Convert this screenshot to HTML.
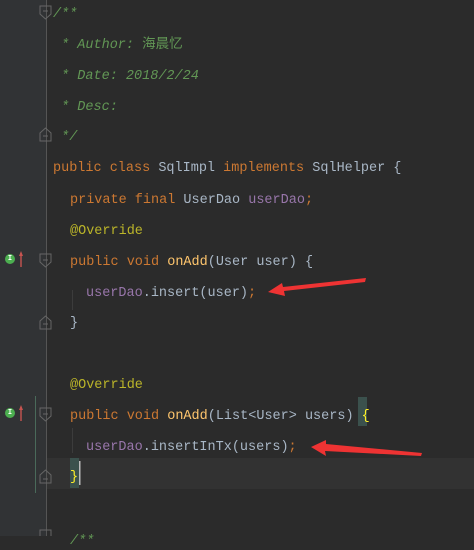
<!DOCTYPE html>
<html><head><meta charset="utf-8"><style>
body{margin:0;width:474px;height:536px;background:#2b2b2b;overflow:hidden;position:relative;font-family:"Liberation Mono","Noto Sans CJK SC",monospace;font-size:13.5px}
.g{position:absolute;left:0;top:0;width:46px;height:536px;background:#313335}
.gl{position:absolute;left:46px;top:0;width:1px;height:536px;background:#555}
.l{position:absolute;white-space:pre;color:#a9b7c6;line-height:16px;margin-top:2px}
.k{color:#cc7832}.c{color:#629755;font-style:italic}.f{color:#ffc66d}.p{color:#9876aa}.a{color:#bbb529}
.ic{position:absolute;left:5px;width:10px;height:10px;border-radius:50%;background:#4caf50;color:#fff;font-size:7px;line-height:10px;text-align:center;font-weight:bold}
</style></head><body>
<div class="g"></div><div class="gl"></div>
<div style="position:absolute;left:47px;top:458px;width:427px;height:31px;background:#323232"></div>
<div style="position:absolute;left:35px;top:396px;width:1px;height:97px;background:#4a6a5a"></div>
<div style="position:absolute;left:72px;top:290px;width:1px;height:20px;background:#3c3c3c"></div>
<div style="position:absolute;left:72px;top:428px;width:1px;height:25px;background:#3c3c3c"></div>
<svg style="position:absolute;left:0;top:0" width="474" height="536">
<g fill="none" stroke="#666">
<path d="M40 6h11v8l-5.5 5-5.5-5z"/><path d="M43 11h5"/>
<path d="M40 141h11v-8l-5.5-5-5.5 5z"/><path d="M43 136h5"/>
<path d="M40 254h11v8l-5.5 5-5.5-5z"/><path d="M43 260h5"/>
<path d="M40 329h11v-8l-5.5-5-5.5 5z"/><path d="M43 324h5"/>
<path d="M40 408h11v8l-5.5 5-5.5-5z"/><path d="M43 414h5"/>
<path d="M40 483h11v-8l-5.5-5-5.5 5z"/><path d="M43 479h5"/>
<path d="M40 536v-6h11v6"/>
</g>
<g fill="#c75450"><path d="M19 256l2-5 2 5h-1.3v11h-1.4v-11z"/><path d="M19 410l2-5 2 5h-1.3v11h-1.4v-11z"/></g>
<g fill="#ee3333">
<path d="M268 292l14-9 1 4 83-9-1 4-81 9 1 5z"/>
<path d="M311 447l15-7 0 4 96 9-1 3-96-5 1 5z"/>
</g>
<rect x="358" y="397" width="9" height="29" fill="#3b514d"/>
<rect x="70" y="458" width="9" height="30" fill="#3b514d"/>
<rect x="79" y="461" width="1.5" height="24" fill="#bbb"/>
</svg>
<div class="ic" style="top:254px">I</div><div class="ic" style="top:408px">I</div>
<div class="l c" style="left:53px;top:5px">/**</div>
<div class="l c" style="left:53px;top:36px"> * Author: <span style="font-style:normal">海晨忆</span></div>
<div class="l c" style="left:53px;top:67px"> * Date: 2018/2/24</div>
<div class="l c" style="left:53px;top:98px"> * Desc:</div>
<div class="l c" style="left:53px;top:128px"> */</div>
<div class="l" style="left:53px;top:159px"><span class="k">public class </span>SqlImpl <span class="k">implements </span>SqlHelper {</div>
<div class="l" style="left:70px;top:191px"><span class="k">private final </span>UserDao <span class="p">userDao</span><span class="k">;</span></div>
<div class="l a" style="left:70px;top:222px">@Override</div>
<div class="l" style="left:70px;top:253px"><span class="k">public void </span><span class="f">onAdd</span>(User user) {</div>
<div class="l" style="left:86px;top:284px"><span class="p">userDao</span>.insert(user)<span class="k">;</span></div>
<div class="l" style="left:70px;top:314px">}</div>
<div class="l a" style="left:70px;top:376px">@Override</div>
<div class="l" style="left:70px;top:407px"><span class="k">public void </span><span class="f">onAdd</span>(List&lt;User&gt; users) <span style="color:#ffef28">{</span></div>
<div class="l" style="left:86px;top:438px"><span class="p">userDao</span>.insertInTx(users)<span class="k">;</span></div>
<div class="l" style="left:70px;top:468px;color:#ffef28">}</div>
<div class="l c" style="left:70px;top:532px">/**</div>
</body></html>
